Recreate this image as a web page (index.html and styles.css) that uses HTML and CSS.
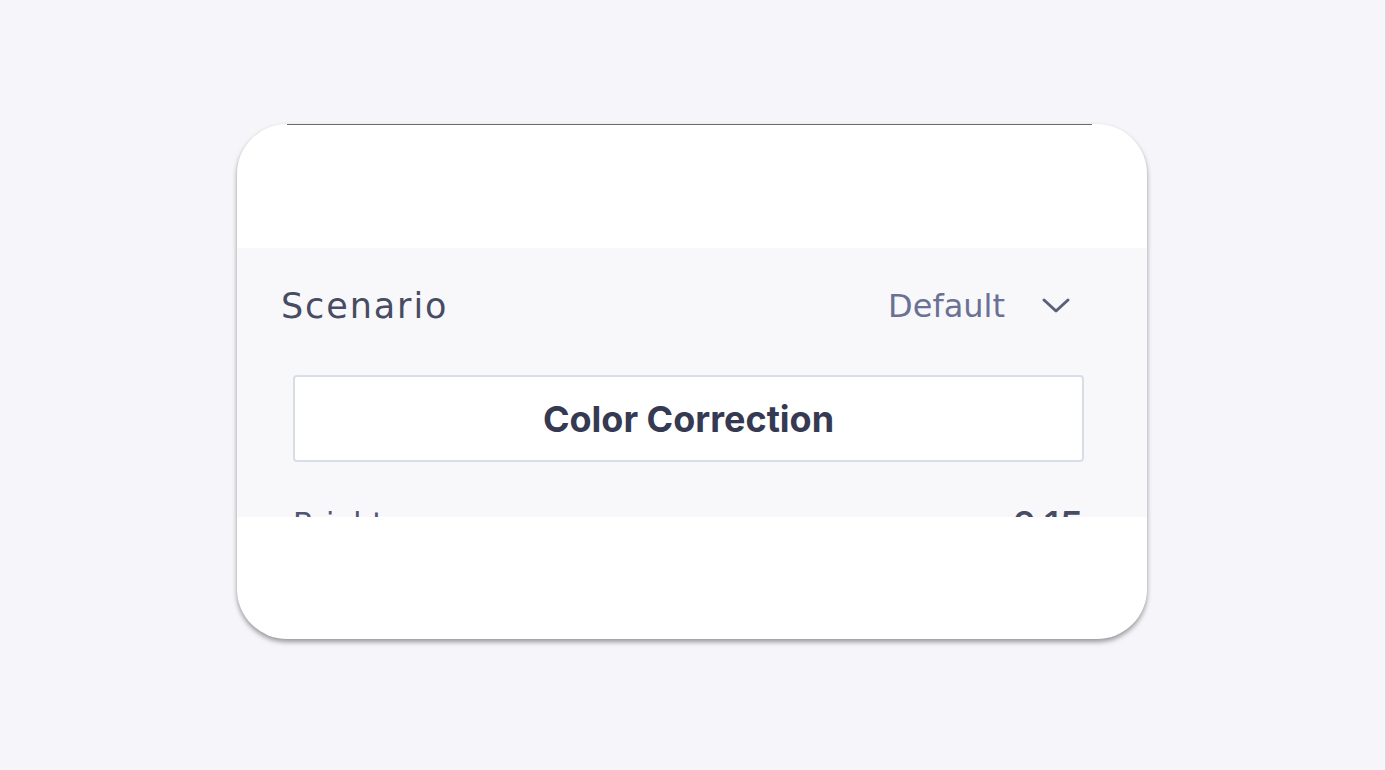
FILE: index.html
```html
<!DOCTYPE html>
<html lang="en">
<head>
<meta charset="utf-8">
<title>Scenario</title>
<link rel="stylesheet" href="styles.css">
</head>
<body>
<div class="card">
  <div class="top-space"></div>
  <div class="panel">
    <div class="scenario-row">
      <span class="scenario-label">Scenario</span>
      <span class="scenario-select">
        <span class="scenario-value">Default</span>
        <svg class="chevron" width="30" height="20" viewBox="0 0 30 20" aria-hidden="true">
          <path d="M3 4 L15 15 L27 4" fill="none" stroke="#5b607a" stroke-width="3" stroke-linecap="round" stroke-linejoin="round"/>
        </svg>
      </span>
    </div>
    <button class="tool-button" type="button">Color Correction</button>
    <div class="slider-row">
      <span class="slider-label">Brightness</span>
      <span class="slider-value">0.15</span>
    </div>
  </div>
  <div class="bottom-space"></div>
</div>
</body>
</html>
```

FILE: styles.css
```css
html, body {
  margin: 0;
  padding: 0;
}

body {
  background: #f5f5fa;
  height: 770px;
  border-right: 1px solid #d6d6db;
  box-sizing: border-box;
  overflow: hidden;
  padding-top: 124px;
  padding-left: 237px;
  font-family: "DejaVu Sans", "Liberation Sans", sans-serif;
}

.card {
  position: relative;
  width: 910px;
  height: 515px;
  background: #ffffff;
  border-radius: 50px;
  overflow: hidden;
  box-shadow: 0 3px 5px rgba(0, 0, 0, 0.38);
}

.card::before {
  content: "";
  position: absolute;
  top: 0;
  left: 50px;
  right: 55px;
  height: 1px;
  background: #6a6a6e;
}

.top-space {
  height: 124px;
}

.panel {
  height: 269px;
  background: #f8f8fb;
  overflow: hidden;
  box-sizing: border-box;
  padding-top: 32px;
}

.scenario-row {
  display: flex;
  align-items: center;
  justify-content: space-between;
  height: 52px;
  padding: 0 76px 0 44px;
}

.scenario-label {
  font-size: 35px;
  letter-spacing: 1.9px;
  color: #474c63;
}

.scenario-select {
  display: flex;
  align-items: center;
  gap: 36px;
}

.scenario-value {
  font-size: 32px;
  color: #6b7194;
}

.chevron {
  display: block;
}

.tool-button {
  display: block;
  margin: 43px 0 0 56px;
  width: 791px;
  height: 87px;
  background: #ffffff;
  border: 2px solid #d9dde8;
  border-radius: 4px;
  font-family: "Inter", "Liberation Sans", sans-serif;
  font-weight: 700;
  font-size: 36px;
  color: #353a52;
  padding: 0;
}

.slider-row {
  display: flex;
  align-items: flex-start;
  justify-content: space-between;
  padding: 0 64px 0 56px;
  margin-top: 44px;
}

.slider-label {
  font-size: 30px;
  color: #4f5573;
}

.slider-value {
  font-family: "Inter", "Liberation Sans", sans-serif;
  font-size: 38px;
  font-weight: 500;
  color: #474c63;
  margin-top: -4px;
}

.bottom-space {
  height: 122px;
}
```
